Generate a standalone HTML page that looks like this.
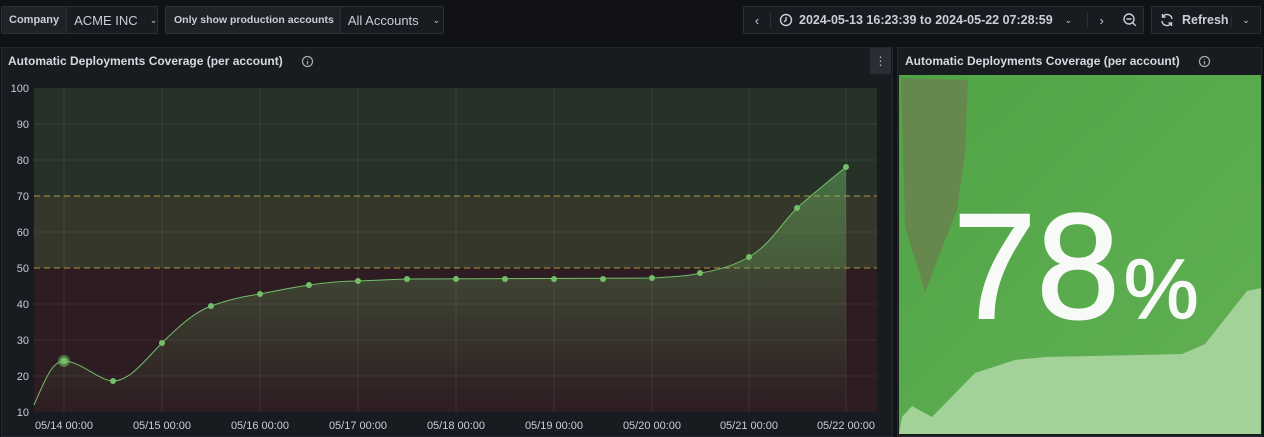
<!DOCTYPE html><html><head><style>
body{margin:0;width:1264px;height:434px;background:#111217;font-family:"Liberation Sans",sans-serif;color:#ccccdc;position:relative;overflow:hidden;white-space:nowrap}
.a{position:absolute}
.box{position:absolute;border:1px solid #2c2f36;background:#181b1f;border-radius:2px;box-sizing:border-box;height:28px;top:6px;font-size:13px;display:flex;align-items:center;white-space:nowrap}
.lab{background:#1f2226;font-size:11px;font-weight:bold;padding:0 7px;height:100%;display:flex;align-items:center;border-right:1px solid #2c2f36;white-space:nowrap}
.panel{position:absolute;background:#181b1f;border:1px solid #24272d;box-sizing:border-box}
.t{font-size:12px;font-weight:bold;color:#d8d9e0}
</style></head><body>
<div class="box" style="left:1px;width:157px"><div class="lab">Company</div><span style="padding-left:7px">ACME INC</span><span style="margin-left:12px;font-size:9px">⌄</span></div>
<div class="box" style="left:165px;width:279px"><div class="lab" style="padding:0 6px 0 8px;font-size:10.5px">Only show production accounts</div><span style="padding-left:7px">All Accounts</span><span style="margin-left:14px;font-size:9px">⌄</span></div>
<div class="box" style="left:743px;width:401px"><span style="width:26px;text-align:center;border-right:1px solid #2c2f36">‹</span>
<svg width="14" height="14" style="margin:0 6px 0 8px" viewBox="0 0 14 14"><circle cx="7" cy="7" r="5.5" fill="none" stroke="#ccccdc" stroke-width="1.4"/><path d="M7 4v3.3l-2 1.5" fill="none" stroke="#ccccdc" stroke-width="1.4"/></svg>
<span style="font-weight:bold;font-size:12.5px">2024-05-13 16:23:39 to 2024-05-22 07:28:59</span><span style="margin-left:12px;font-size:9px;width:22px">⌄</span><span style="width:28px;text-align:center;border-left:1px solid #2c2f36">›</span>
<svg width="16" height="16" viewBox="0 0 16 16" style="margin-left:6px"><circle cx="7" cy="7" r="5" fill="none" stroke="#ccccdc" stroke-width="1.4"/><path d="M4.5 7h5M10.7 10.7l3 3" stroke="#ccccdc" stroke-width="1.4"/></svg></div>
<div class="box" style="left:1151px;width:110px"><svg width="14" height="14" viewBox="0 0 14 14" style="margin:0 8px"><path d="M12 6A5 5 0 0 0 3 3.5M2 8a5 5 0 0 0 9 2.5" fill="none" stroke="#ccccdc" stroke-width="1.4"/><path d="M2.5 1v3h3M11.5 13v-3h-3" fill="none" stroke="#ccccdc" stroke-width="1.4"/></svg><span style="font-weight:bold;font-size:12.5px">Refresh</span><span style="margin-left:auto;width:28px;text-align:center;border-left:1px solid #2c2f36;font-size:9px">⌄</span></div>

<div class="panel" style="left:1px;top:47px;width:892px;height:390px"></div>
<div class="a t" style="left:8px;top:54px">Automatic Deployments Coverage (per account)</div>
<svg class="a" style="left:301px;top:55px" width="13" height="13"><circle cx="6.5" cy="6.5" r="5" fill="none" stroke="#aaa" stroke-width="1.2"/><path d="M6.5 6v3.5M6.5 4v.5" stroke="#aaa" stroke-width="1.2"/></svg>
<div class="a" style="left:870px;top:48px;width:21px;height:26px;background:#2a2d33;color:#bbb;text-align:center;font-size:12px;line-height:26px">⋮</div>

<svg class="a" style="left:0;top:75px" width="893" height="359" viewBox="0 75 893 359">
<defs><linearGradient id="g" x1="0" y1="0" x2="0" y2="1"><stop offset="0" stop-color="#73bf69" stop-opacity=".45"/><stop offset="1" stop-color="#73bf69" stop-opacity="0"/></linearGradient></defs>
<rect x="34" y="88" width="843" height="108" fill="#263128"/>
<rect x="34" y="196" width="843" height="72" fill="#35372a"/>
<rect x="34" y="268" width="843" height="144" fill="#2d1c21"/>
<g stroke="#ffffff" stroke-opacity=".08">
<line x1="34" x2="877" y1="124" y2="124"/><line x1="34" x2="877" y1="160" y2="160"/><line x1="34" x2="877" y1="232" y2="232"/><line x1="34" x2="877" y1="304" y2="304"/><line x1="34" x2="877" y1="340" y2="340"/><line x1="34" x2="877" y1="376" y2="376"/>
<line x1="64" x2="64" y1="88" y2="412"/><line x1="162" x2="162" y1="88" y2="412"/><line x1="260" x2="260" y1="88" y2="412"/><line x1="358" x2="358" y1="88" y2="412"/><line x1="456" x2="456" y1="88" y2="412"/><line x1="554" x2="554" y1="88" y2="412"/><line x1="652" x2="652" y1="88" y2="412"/><line x1="749" x2="749" y1="88" y2="412"/><line x1="846" x2="846" y1="88" y2="412"/>
</g>
<line x1="34" x2="877" y1="196" y2="196" stroke="#e0c34a" stroke-dasharray="6 4" stroke-opacity=".7"/>
<line x1="34" x2="877" y1="268" y2="268" stroke="#e0c34a" stroke-dasharray="6 4" stroke-opacity=".7"/>
<path d="M34 405C45 380 52 361 64 361C80 361 100 381 113 381C130 381 145 360 162 343C180 325 195 312 211 306C230 299 245 296 260 294C280 290 295 287 309 285C330 282 345 281 358 281L407 279L652 278C670 277 690 276 700 273C720 270 735 265 749 257C770 245 780 225 797 208C815 192 830 180 846 167L846 412L34 412Z" fill="url(#g)"/>
<path d="M34 405C45 380 52 361 64 361C80 361 100 381 113 381C130 381 145 360 162 343C180 325 195 312 211 306C230 299 245 296 260 294C280 290 295 287 309 285C330 282 345 281 358 281L407 279L652 278C670 277 690 276 700 273C720 270 735 265 749 257C770 245 780 225 797 208C815 192 830 180 846 167" fill="none" stroke="#73bf69" stroke-width="1"/>
<g fill="#73bf69"><circle cx="64" cy="361" r="6" opacity=".5"/><circle cx="64" cy="361" r="3.5"/><circle cx="113" cy="381" r="3"/><circle cx="162" cy="343" r="3"/><circle cx="211" cy="306" r="3"/><circle cx="260" cy="294" r="3"/><circle cx="309" cy="285" r="3"/><circle cx="358" cy="281" r="3"/><circle cx="407" cy="279" r="3"/><circle cx="456" cy="279" r="3"/><circle cx="505" cy="279" r="3"/><circle cx="554" cy="279" r="3"/><circle cx="603" cy="279" r="3"/><circle cx="652" cy="278" r="3"/><circle cx="700" cy="273" r="3"/><circle cx="749" cy="257" r="3"/><circle cx="797" cy="208" r="3"/><circle cx="846" cy="167" r="3"/></g>
<g fill="#ccccdc" font-size="11" text-anchor="end"><text x="29" y="92">100</text><text x="29" y="128">90</text><text x="29" y="164">80</text><text x="29" y="200">70</text><text x="29" y="236">60</text><text x="29" y="272">50</text><text x="29" y="308">40</text><text x="29" y="344">30</text><text x="29" y="380">20</text><text x="29" y="416">10</text></g>
<g fill="#ccccdc" font-size="11" text-anchor="middle"><text x="64" y="429">05/14 00:00</text><text x="162" y="429">05/15 00:00</text><text x="260" y="429">05/16 00:00</text><text x="358" y="429">05/17 00:00</text><text x="456" y="429">05/18 00:00</text><text x="554" y="429">05/19 00:00</text><text x="652" y="429">05/20 00:00</text><text x="749" y="429">05/21 00:00</text><text x="846" y="429">05/22 00:00</text></g>
</svg>

<div class="panel" style="left:897px;top:47px;width:365px;height:390px"></div>
<div class="a t" style="left:905px;top:54px">Automatic Deployments Coverage (per account)</div>
<svg class="a" style="left:1198px;top:55px" width="13" height="13"><circle cx="6.5" cy="6.5" r="5" fill="none" stroke="#aaa" stroke-width="1.2"/><path d="M6.5 6v3.5M6.5 4v.5" stroke="#aaa" stroke-width="1.2"/></svg>
<svg class="a" style="left:899px;top:75px" width="362" height="359" viewBox="899 75 362 359">
<defs><linearGradient id="h" x1="0" y1="0" x2="1" y2="1"><stop offset="0" stop-color="#4fa446"/><stop offset="1" stop-color="#62b154"/></linearGradient></defs>
<rect x="899" y="75" width="362" height="359" fill="url(#h)"/>
<path d="M901 78L968 80L965 153L957 210L925 292L905 227Z" fill="#66884c"/>
<path d="M899 434L902 417L912 406L932 417L975 373L1015 360L1045 357L1182 354L1205 344L1247 291L1261 288L1261 434Z" fill="#a2d298"/>
<text x="953" y="318" fill="#f7faf6" font-size="150" font-family="Liberation Sans,sans-serif" stroke="#f7faf6" stroke-width="2">78<tspan font-size="84" stroke-width="1.5" dx="4">%</tspan></text>
</svg>
</body></html>
